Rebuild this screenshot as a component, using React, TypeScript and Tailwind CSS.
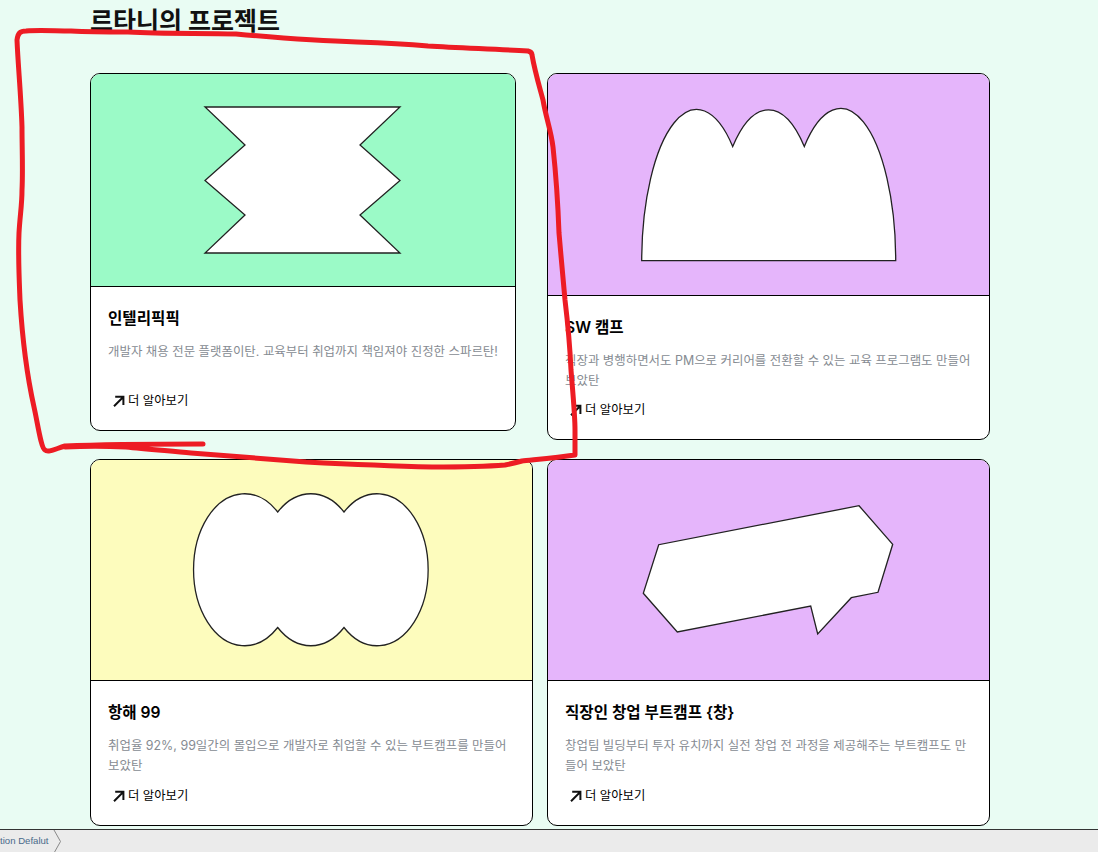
import type { ReactNode } from "react";

const font = "font-['Inter','Noto_Sans_CJK_KR',sans-serif]";

function Spiky() {
  return (
    <svg width="197" height="148" viewBox="205 106 197 148" className="block overflow-visible">
      <polygon
        points="205,107 400,107 360,145 400,180.5 360,215 400,253 205,253 245,215 205,180.5 245,145"
        fill="#fff"
        stroke="#222"
        strokeWidth="1.3"
      />
    </svg>
  );
}

function Dome() {
  return (
    <svg width="256" height="154" viewBox="641 108 256 154" className="block overflow-visible">
      <path
        d="M641.7 260.7A55 152 0 0 1 732.7 146.5A55 152 0 0 1 804.3 146.5A55 152 0 0 1 895.7 260.7Z"
        fill="#fff"
        stroke="#222"
        strokeWidth="1.3"
      />
    </svg>
  );
}

function Cloud() {
  return (
    <svg width="236" height="154" viewBox="194 493 236 154" className="block overflow-visible">
      <path
        d="M277.7 512A51 76 0 0 1 344 512A51 76 0 1 1 344 627.5A51 76 0 0 1 277.7 627.5A51 76 0 1 1 277.7 512Z"
        fill="#fff"
        stroke="#222"
        strokeWidth="1.3"
      />
    </svg>
  );
}

function Bubble() {
  return (
    <svg width="252" height="132" viewBox="643 504 252 132" className="block overflow-visible">
      <polygon
        points="859,505.7 892.7,544.3 878,592.3 851.3,597.7 817.7,634 810.7,606 677.3,632 643.3,593.3 658.7,544.7"
        fill="#fff"
        stroke="#222"
        strokeWidth="1.3"
      />
    </svg>
  );
}

function Arrow() {
  return (
    <svg width="12" height="12" viewBox="0 0 12 12" fill="none" stroke="#111" strokeWidth="2" className="shrink-0">
      <path d="M1 11.2L10.2 2M2.2 1.8H10.4V10" />
    </svg>
  );
}

type CardProps = {
  title: string;
  text: string;
  color: string;
  imageHeight: string;
  bodyHeight: string;
  className?: string;
  children: ReactNode;
};

function Card({ title, text, color, imageHeight, bodyHeight, className, children }: CardProps) {
  return (
    <article className={`flex flex-col overflow-hidden rounded-[10px] border border-black bg-white ${className ?? ""}`}>
      <div className={`flex items-center justify-center border-b border-black ${color} ${imageHeight}`}>
        {children}
      </div>
      <div className={`flex flex-col pt-[22px] pr-[15px] pl-[17px] ${bodyHeight}`}>
        <h2 className="text-[15.6px] leading-[20px] font-semibold text-black">{title}</h2>
        <p className="mt-[13px] text-[12.45px] leading-[20px] text-[#868b92]">{text}</p>
        <a className="mt-auto mb-[19px] flex items-center gap-[3px] pl-[5px] text-[12.35px] leading-[20px] text-black">
          <Arrow />
          더 알아보기
        </a>
      </div>
    </article>
  );
}

export default function App() {
  return (
    <div className={`relative flex h-[852px] w-[1098px] flex-col overflow-hidden bg-[#e9fcf3] ${font}`}>
      <main className="h-[829px] px-[90px] pt-[5px]">
        <h1 className="h-[68px] text-[25px] leading-[32px] font-bold text-[#111]">르타니의 프로젝트</h1>
        <div className="grid w-[900px] grid-cols-[443px_443px] gap-x-[14px] gap-y-[19px]">
          <Card
            title="인텔리픽픽"
            text="개발자 채용 전문 플랫폼이탄. 교육부터 취업까지 책임져야 진정한 스파르탄!"
            color="bg-[#9bfac7]"
            imageHeight="h-[213px]"
            bodyHeight="h-[143px]"
            className="w-[426px] self-start"
          >
            <Spiky />
          </Card>
          <Card
            title="SW 캠프"
            text="직장과 병행하면서도 PM으로 커리어를 전환할 수 있는 교육 프로그램도 만들어 보았탄"
            color="bg-[#e5b5fb]"
            imageHeight="h-[222px]"
            bodyHeight="h-[143px]"
          >
            <Dome />
          </Card>
          <Card
            title="항해 99"
            text="취업율 92%, 99일간의 몰입으로 개발자로 취업할 수 있는 부트캠프를 만들어 보았탄"
            color="bg-[#fdfcbd]"
            imageHeight="h-[221px]"
            bodyHeight="h-[144px]"
          >
            <Cloud />
          </Card>
          <Card
            title="직장인 창업 부트캠프 {창}"
            text="창업팀 빌딩부터 투자 유치까지 실전 창업 전 과정을 제공해주는 부트캠프도 만들어 보았탄"
            color="bg-[#e5b5fb]"
            imageHeight="h-[221px]"
            bodyHeight="h-[144px]"
          >
            <Bubble />
          </Card>
        </div>
      </main>

      <footer className="flex h-[23px] items-center overflow-hidden border-t border-[#333] bg-[#ebebeb]">
        <span className="w-[53px] font-['Liberation_Sans',sans-serif] text-[9.6px] text-[#4a6a8a]">tion Defalut</span>
        <svg width="9" height="23" viewBox="0 0 9 23" fill="none" stroke="#888" className="shrink-0">
          <path d="M1 0L7.5 11.5L1 23" />
        </svg>
      </footer>

      {/* hand-drawn annotation on top of the page */}
      <svg width="1098" height="852" className="pointer-events-none absolute inset-0" fill="none">
        <path
          d="M203 444C160 444 110 444 65 446C55 449 48 453 45 450C41 448 38 425 34 407C28 380 23 350 20 300C19 275 18 255 19 233C20 215 22 205 22 190C23 170 22 150 22 127C21 95 18 65 17 40C18 33 20 31 26 31C40 30 55 31 71 31C90 32 110 32 128 32C165 34 200 33 236 34C280 38 320 41 357 42C385 43 405 44 428 46C460 48 495 49 528 51C532 52 532 54 532 55C535 72 539 85 543 100C546 118 551 130 553 147C556 175 558 205 559 233C561 255 563 280 565 300C568 325 570 348 571 370C573 395 575 415 575 430C575 442 575 450 575 455C555 458 530 460 522 461C515 463 510 464 505 465C480 467 455 467 432 467C390 466 345 464 306 462C265 459 225 456 191 453C170 451 145 449 126 447C105 446 85 446 65 447"
          stroke="#ed1c24"
          strokeWidth="5"
          strokeLinecap="round"
          strokeLinejoin="round"
        />
      </svg>
    </div>
  );
}
